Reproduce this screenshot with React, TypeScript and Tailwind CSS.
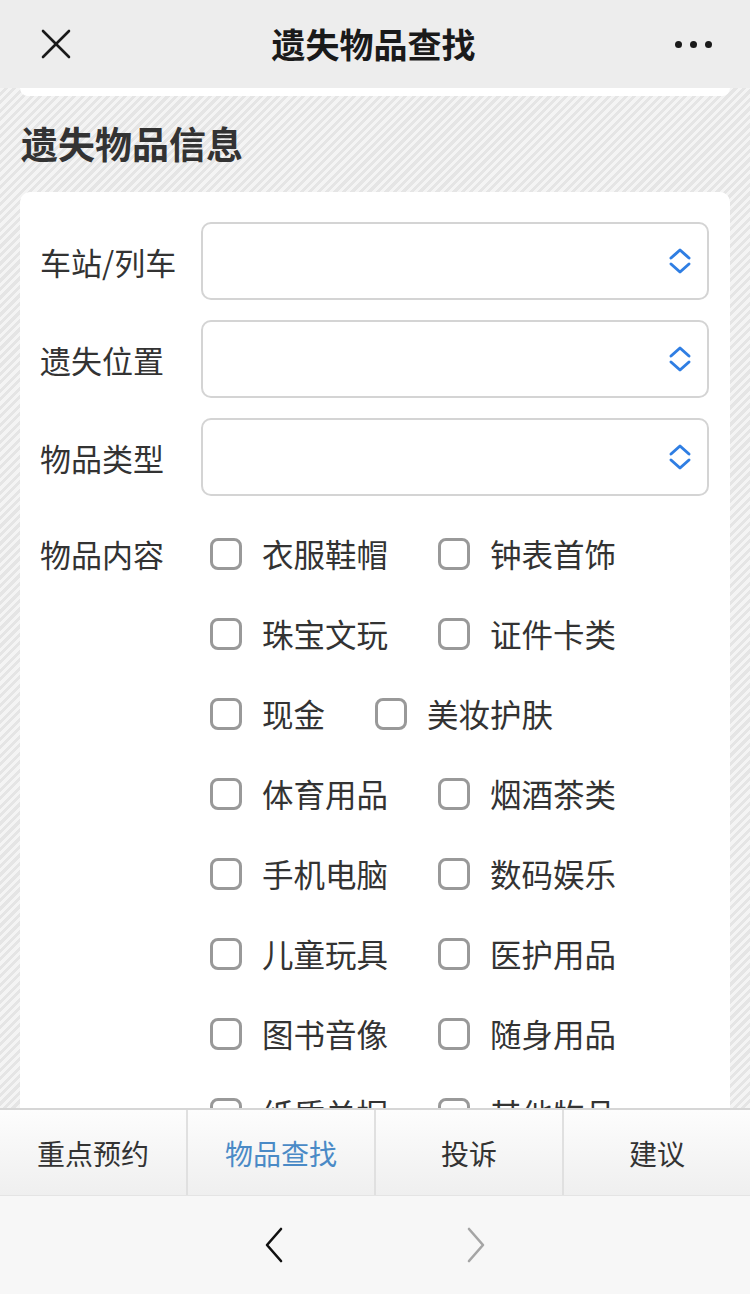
import React from "react";

const SELECT_ROWS = ["车站/列车", "遗失位置", "物品类型"];

const ITEMS = [
  "衣服鞋帽",
  "钟表首饰",
  "珠宝文玩",
  "证件卡类",
  "现金",
  "美妆护肤",
  "体育用品",
  "烟酒茶类",
  "手机电脑",
  "数码娱乐",
  "儿童玩具",
  "医护用品",
  "图书音像",
  "随身用品",
  "纸质单据",
  "其他物品",
];

const TABS = ["重点预约", "物品查找", "投诉", "建议"];

function UpDown() {
  return (
    <svg width="26" height="28" viewBox="0 0 26 28" fill="none" stroke="#2f7ee3" strokeWidth="3" strokeLinecap="round" strokeLinejoin="round">
      <path d="M4 11 L13 3 L22 11" />
      <path d="M4 17 L13 25 L22 17" />
    </svg>
  );
}

export default function App() {
  return (
    <div className="w-[750px] h-[1294px] flex flex-col overflow-hidden font-['Noto_Sans_CJK_SC','Noto_Sans',sans-serif] text-[#333]">
      {/* Header */}
      <div className="h-[88px] shrink-0 bg-[#ededed] flex items-center justify-between px-[40px]">
        <svg width="32" height="32" viewBox="0 0 32 32" fill="none" stroke="#1a1a1a" strokeWidth="2.6" strokeLinecap="round">
          <line x1="3" y1="3" x2="29" y2="29" />
          <line x1="29" y1="3" x2="3" y2="29" />
        </svg>
        <div className="text-[34px] font-bold text-[#1a1a1a] leading-none">遗失物品查找</div>
        <div className="flex items-center gap-[8px] mr-[-2px]">
          <span className="w-[7px] h-[7px] rounded-full bg-[#1a1a1a]" />
          <span className="w-[7px] h-[7px] rounded-full bg-[#1a1a1a]" />
          <span className="w-[7px] h-[7px] rounded-full bg-[#1a1a1a]" />
        </div>
      </div>

      {/* Content */}
      <div className="flex-1 overflow-hidden bg-[repeating-linear-gradient(135deg,#f4f4f4_0px,#f4f4f4_3px,#e5e5e5_3px,#e5e5e5_6px)]">
        <div className="mx-[20px] h-[8px] bg-white rounded-b-[10px]" />
        <h2 className="mt-[26px] mb-[28px] px-[21px] text-[37px] leading-[42px] font-bold text-[#333]">遗失物品信息</h2>
        <div className="mx-[20px] bg-white rounded-[10px] pl-[20px] pr-[21px] pt-[30px]">
          {SELECT_ROWS.map((label) => (
            <div key={label} className="flex items-center mb-[20px]">
              <div className="w-[161px] shrink-0 text-[31px] leading-none">{label}</div>
              <div className="flex-1 h-[78px] border-2 border-[#d4d4d4] rounded-[10px] flex items-center justify-end pr-[14px]">
                <UpDown />
              </div>
            </div>
          ))}
          <div className="flex -mt-[2px]">
            <div className="w-[161px] shrink-0 h-[80px] flex items-center text-[31px]">物品内容</div>
            <div className="flex-1 flex flex-wrap pl-[9px]">
              {ITEMS.map((item) => (
                <div key={item} className="h-[80px] flex items-center mr-[50px]">
                  <span className="w-[32px] h-[32px] border-[3px] border-[#999] rounded-[8px] shrink-0" />
                  <span className="ml-[20px] text-[31.5px] leading-none">{item}</span>
                </div>
              ))}
            </div>
          </div>
        </div>
      </div>

      {/* Tabs */}
      <div className="h-[87px] shrink-0 flex border-t-2 border-[#d6d6d6] bg-gradient-to-b from-[#fdfdfd] to-[#efefef]">
        {TABS.map((t, i) => (
          <div
            key={t}
            className={`flex-1 flex items-center justify-center text-[28px] ${i < 3 ? "border-r-2 border-[#e0e0e0]" : ""} ${i === 1 ? "text-[#4a8ac6]" : "text-[#333]"}`}
          >
            {t}
          </div>
        ))}
      </div>

      {/* Nav */}
      <div className="h-[99px] shrink-0 bg-[#f7f7f7] border-t border-[#e4e4e4] flex items-center justify-center gap-[182px]">
        <svg width="20" height="36" viewBox="0 0 20 36" fill="none" stroke="#111" strokeWidth="2.6" strokeLinecap="round" strokeLinejoin="round">
          <path d="M17 2 L3 18 L17 34" />
        </svg>
        <svg width="20" height="36" viewBox="0 0 20 36" fill="none" stroke="#a5a5a5" strokeWidth="2.6" strokeLinecap="round" strokeLinejoin="round">
          <path d="M3 2 L17 18 L3 34" />
        </svg>
      </div>
    </div>
  );
}
